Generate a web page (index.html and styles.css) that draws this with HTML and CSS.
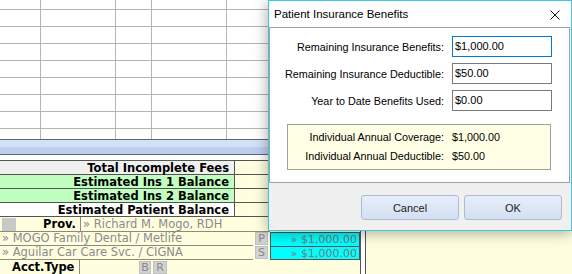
FILE: index.html
```html
<!DOCTYPE html>
<html lang="en">
<head>
    <meta charset="UTF-8">
    <title>Patient Insurance Benefits</title>
    <link rel="stylesheet" href="styles.css">
</head>
<body>

<div class="app">
    <!-- empty procedure grid -->
    <div class="sheet">
        <div class="sheet-row first"><span></span><span></span><span></span><span></span><span></span></div>
        <div class="sheet-row"><span></span><span></span><span></span><span></span><span></span></div>
        <div class="sheet-row"><span></span><span></span><span></span><span></span><span></span></div>
        <div class="sheet-row"><span></span><span></span><span></span><span></span><span></span></div>
        <div class="sheet-row"><span></span><span></span><span></span><span></span><span></span></div>
        <div class="sheet-row"><span></span><span></span><span></span><span></span><span></span></div>
        <div class="sheet-row"><span></span><span></span><span></span><span></span><span></span></div>
        <div class="sheet-row"><span></span><span></span><span></span><span></span><span></span></div>
        <div class="sheet-row last"><span></span><span></span><span></span><span></span><span></span></div>
    </div>

    <div class="splitter"></div>

    <div class="balances">
        <div class="bal-row gray"><div class="bal-label">Total Incomplete Fees</div><div class="bal-value"></div></div>
        <div class="bal-row green"><div class="bal-label">Estimated Ins 1 Balance</div><div class="bal-value"></div></div>
        <div class="bal-row green"><div class="bal-label">Estimated Ins 2 Balance</div><div class="bal-value"></div></div>
        <div class="bal-row white"><div class="bal-label">Estimated Patient Balance</div><div class="bal-value"></div></div>
    </div>

    <div class="lower">
        <div class="ins-panel">
            <div class="prov-row">
                <span class="swatch"></span>
                <span class="prov-label">Prov.</span>
                <span class="prov-name">» Richard M. Mogo, RDH</span>
            </div>
            <div class="plan-row">
                <span class="plan-name">» MOGO Family Dental / Metlife</span>
                <span class="tag">P</span>
                <span class="amount">» $1,000.00</span>
            </div>
            <div class="plan-row">
                <span class="plan-name">» Aguilar Car Care Svc. / CIGNA</span>
                <span class="tag">S</span>
                <span class="amount">» $1,000.00</span>
            </div>
            <div class="acct-row">
                <span class="acct-label">Acct.Type</span>
                <span class="acct-gap"></span>
                <span class="tag">B</span>
                <span class="tag">R</span>
            </div>
        </div>
        <div class="side-panel"></div>
    </div>

    <!-- modal dialog -->
    <div class="dialog">
        <div class="title-bar">
            <span class="title">Patient Insurance Benefits</span>
            <svg class="close" width="10" height="10" viewBox="0 0 10 10">
                <path d="M0.5 0.5 L9.5 9.5 M9.5 0.5 L0.5 9.5" stroke="#111" stroke-width="1" fill="none"/>
            </svg>
        </div>
        <div class="dialog-body">
            <div class="field-grid">
                <label>Remaining Insurance Benefits:</label>
                <div class="field focused">$1,000.00</div>
                <label>Remaining Insurance Deductible:</label>
                <div class="field">$50.00</div>
                <label>Year to Date Benefits Used:</label>
                <div class="field">$0.00</div>
            </div>
            <div class="info-box">
                <span class="info-label">Individual Annual Coverage:</span>
                <span class="info-value">$1,000.00</span>
                <span class="info-label">Individual Annual Deductible:</span>
                <span class="info-value">$50.00</span>
            </div>
        </div>
        <div class="button-bar">
            <button>Cancel</button>
            <button>OK</button>
        </div>
    </div>
</div>

</body>
</html>
```

FILE: styles.css
```css
body {
    margin: 0;
    padding: 0;
    background-color: #fff;
    font-family: "DejaVu Sans", Verdana, sans-serif;
    overflow: hidden;
}

.app {
    position: relative;
    width: 572px;
    height: 274px;
    overflow: hidden;
}

/* grid at the top */
.sheet-row {
    display: flex;
    height: 16px;
    border-top: 1px solid #b4b4b4;
}

.sheet-row.first {
    height: 9px;
    border-top: none;
}

.sheet-row.last {
    height: 10px;
}

.sheet-row span {
    border-right: 1px solid #b4b4b4;
}

.sheet-row span:nth-child(1) { width: 40px; }
.sheet-row span:nth-child(2) { width: 74px; }
.sheet-row span:nth-child(3) { width: 35px; }
.sheet-row span:nth-child(4) { width: 74px; }
.sheet-row span:nth-child(5) { flex: 1; border-right: none; }

.splitter {
    height: 14px;
    border-top: 1px solid #5e6675;
    border-bottom: 1px solid #5e6675;
    background: linear-gradient(#d4e2f6 0, #d4e2f6 7px, #bccfef 7px, #bccfef 100%);
}

/* balance table */
.balances {
    margin-top: 5px;
    border-top: 1px solid #555;
    background-color: #ffffe0;
}

.bal-row {
    display: flex;
    height: 13px;
    border-bottom: 1px solid #555;
}

.bal-label {
    width: 229px;
    padding-right: 5px;
    border-right: 1px solid #555;
    text-align: right;
    font-weight: bold;
    font-size: 11.5px;
    line-height: 14px;
    color: #000;
}

.bal-row.gray .bal-label { background-color: #f0f0f0; }
.bal-row.green .bal-label { background-color: #c0ffc0; }
.bal-row.white .bal-label { background-color: #fff; }

.bal-value {
    flex: 1;
}

/* lower panels */
.lower {
    display: flex;
    height: 57px;
}

.ins-panel {
    width: 360px;
    background-color: #ffffe0;
    border-right: 1px solid #555;
    font-size: 11.5px;
    color: #8a8a8a;
}

.side-panel {
    flex: 1;
    margin-left: 4px;
    background-color: #ffffe0;
    border-left: 1px solid #555;
}

.prov-row {
    display: flex;
    height: 14px;
    border-bottom: 1px solid #8c8c7c;
    width: 270px;
}

.swatch {
    width: 14px;
    height: 13px;
    margin: 1px 1px 0 2px;
    background-color: #c8c8c8;
}

.prov-label {
    width: 59px;
    padding-right: 4px;
    text-align: right;
    font-weight: bold;
    color: #000;
    line-height: 15px;
    border-right: 1px solid #8c8c7c;
}

.prov-name {
    padding-left: 2px;
    line-height: 15px;
}

.plan-row {
    display: flex;
    height: 14px;
}

.plan-name {
    width: 253px;
    padding-left: 2px;
    line-height: 13px;
    border-bottom: 1px solid #8c8c7c;
    box-sizing: border-box;
}

.tag {
    width: 13px;
    height: 13px;
    margin-left: 2px;
    background-color: #d2d2d2;
    border: 1px solid #c0c0c0;
    box-sizing: border-box;
    text-align: center;
    font-size: 11px;
    line-height: 11px;
    color: #888;
}

.amount {
    width: 90px;
    margin-left: 2px;
    background-color: #00ffff;
    border: 1px solid #555;
    border-bottom: none;
    box-sizing: border-box;
    text-align: right;
    padding-right: 2px;
    font-size: 11px;
    line-height: 13px;
    color: #7a7a7a;
}

.plan-row + .plan-row .amount {
    border-bottom: 1px solid #555;
}

.acct-row {
    display: flex;
    height: 14px;
}

.acct-label {
    width: 80px;
    padding-left: 12px;
    box-sizing: border-box;
    font-weight: bold;
    color: #000;
    line-height: 14px;
    border-right: 1px solid #8c8c7c;
}

.acct-gap {
    width: 58px;
}

.acct-row .tag {
    height: 13px;
    margin-top: 1px;
    margin-left: 1px;
    width: 12px;
}

.acct-row .tag + .tag {
    width: 14px;
    margin-left: 2px;
}

/* dialog */
.dialog {
    position: absolute;
    left: 268px;
    top: 0;
    width: 302px;
    height: 229px;
    border: 1px solid #3cc8e2;
    background-color: #f0f0f0;
    box-shadow: 0 2px 14px rgba(0, 0, 0, 0.35);
    font-family: "Liberation Sans", Arial, sans-serif;
    font-size: 10.8px;
    color: #000;
    display: flex;
    flex-direction: column;
}

.title-bar {
    height: 26px;
    background-color: #fff;
    display: flex;
    align-items: center;
    justify-content: space-between;
    padding: 0 11px 0 5px;
}

.title {
    font-size: 11.5px;
}

.close {
    margin-top: 1px;
}

.dialog-body {
    height: 146px;
    margin-right: 1px;
    background-color: #fff;
    border: 1px solid #a0a0a0;
    padding-top: 8px;
}

.field-grid {
    display: grid;
    grid-template-columns: 174px 100px;
    column-gap: 8px;
    row-gap: 6px;
    align-items: center;
}

.field-grid label {
    text-align: right;
}

.field {
    height: 21px;
    box-sizing: border-box;
    border: 1px solid #7a7a7a;
    padding-left: 2px;
    line-height: 19px;
    font-size: 11px;
}

.field.focused {
    border-color: #0078d7;
}

.info-box {
    margin: 13px 0 0 17px;
    width: 264px;
    height: 46px;
    box-sizing: border-box;
    padding-top: 6px;
    background-color: #ffffe5;
    border: 1px solid #a0a0a0;
    display: grid;
    grid-template-columns: 156px auto;
    column-gap: 8px;
    align-content: start;
    row-gap: 6px;
    line-height: 13px;
}

.info-label {
    text-align: right;
}

.button-bar {
    flex: 1;
    display: flex;
    justify-content: flex-end;
    align-items: flex-start;
    gap: 5px;
    padding: 12px 9px 0 0;
}

button {
    width: 98px;
    height: 25px;
    border: 1px solid #adbbd2;
    border-radius: 3px;
    background: linear-gradient(#e6eefb, #d3e0f2);
    font-family: "Liberation Sans", Arial, sans-serif;
    font-size: 11px;
    color: #222;
}
```
